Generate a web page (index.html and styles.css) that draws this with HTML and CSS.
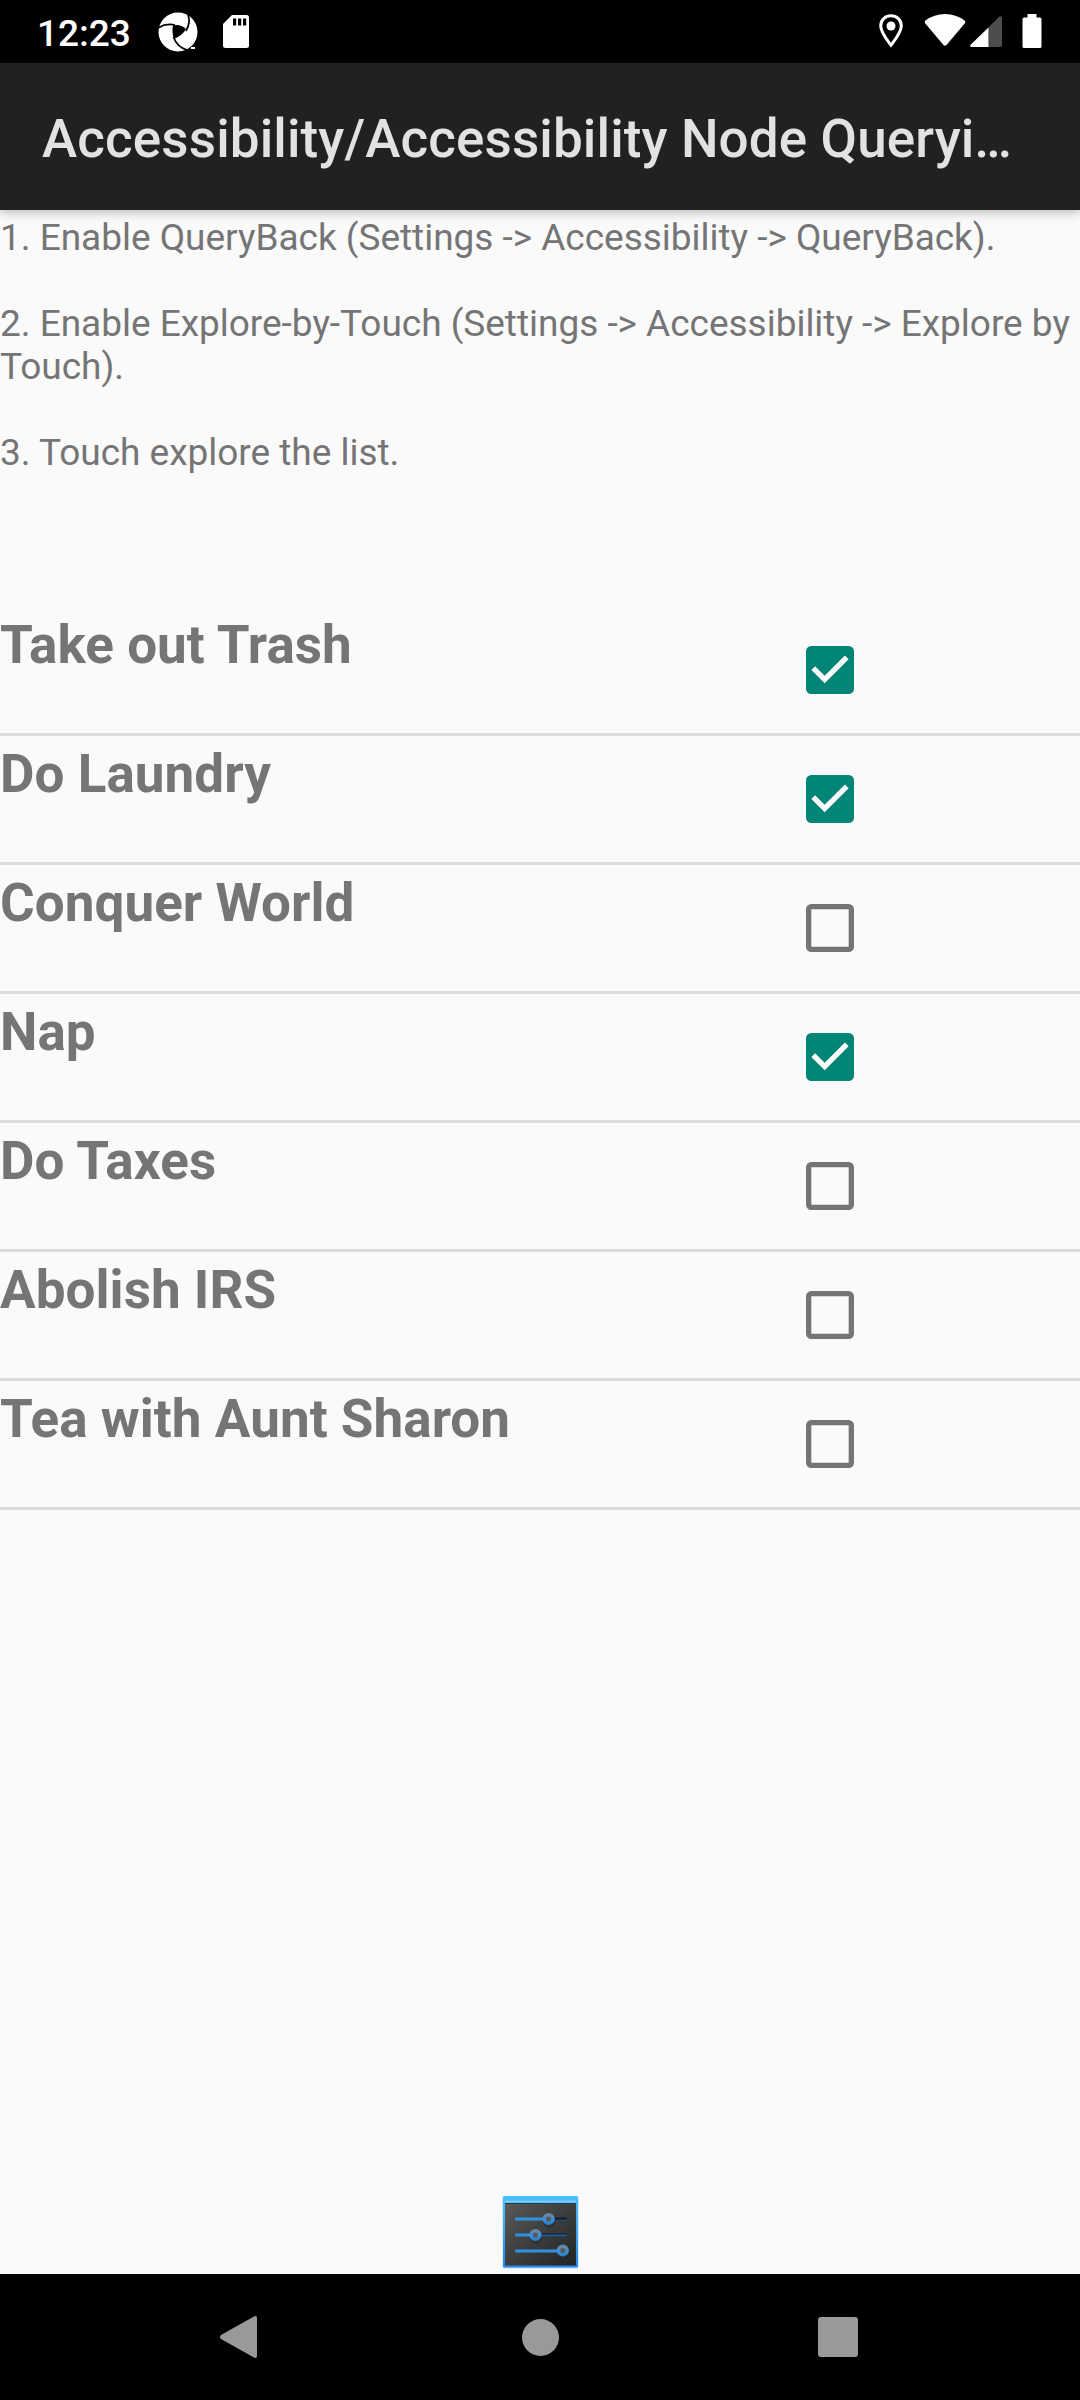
FILE: index.html
```html
<!DOCTYPE html>
<html lang="en">
<head>
<meta charset="utf-8">
<title>Accessibility Node Querying</title>
<link rel="stylesheet" href="styles.css">
</head>
<body>
<div class="screen">
  <div class="status">
    <span class="clock">12:23</span>
    <svg class="aperture" width="40" height="40" viewBox="0 0 40 40">
      <circle cx="20" cy="20" r="19.5" fill="#fff"/>
      <path d="M15 13.500Q22 11.500 28 17Q25 23 16 27Q13.500 20 15 13.500Z" fill="#000"/>
      <g fill="none" stroke="#000" stroke-width="1.700">
        <path d="M0 16Q8 11 17 13"/>
        <path d="M28 19Q33 10 30 3"/>
        <path d="M15.500 25Q19 35 29 38"/>
      </g>
      <path d="M33 35h4v2h-4z" fill="#fff"/>
    </svg>
    <svg class="sd" width="26" height="33" viewBox="0 0 26 33">
      <path d="M9 0H23.500Q26 0 26 2.500V30.500Q26 33 23.500 33H2.500Q0 33 0 30.500V9Z" fill="#fff"/>
      <path d="M10 3.500h3.200v7H10zM15 3.500h3.200v7H15zM20 3.500h3.200v7H20z" fill="#000"/>
    </svg>
    <span class="spring"></span>
    <svg class="pin" width="24" height="34" viewBox="0 0 24 34">
      <path d="M12 1.700C6.200 1.700 1.700 6 1.700 11.700C1.700 18.500 7.500 25 12 31.200C16.500 25 22.300 18.500 22.300 11.700C22.300 6 17.800 1.700 12 1.700Z" fill="none" stroke="#fff" stroke-width="3"/>
      <circle cx="12" cy="12" r="4.500" fill="#fff"/>
    </svg>
    <svg class="wifi" width="42" height="32" viewBox="0 0 42 32">
      <path d="M1.500 6.500Q10 0 21 0T40.500 6.500Q42 8 40.700 9.500L22.500 31Q21 32.500 19.500 31L1.300 9.500Q0 8 1.500 6.500Z" fill="#fff"/>
    </svg>
    <svg class="cell" width="32" height="31" viewBox="0 0 32 31">
      <path d="M18.500 11.500L29 .8Q32-1 32 2V29Q32 31 30 31H18.500Z" fill="#4d4d4d"/>
      <path d="M18.500 11.500V31H2Q-1 31 .8 28.500Z" fill="#fff"/>
    </svg>
    <svg class="battery" width="20" height="34" viewBox="0 0 20 34">
      <path d="M5.500 0h9v3.500H18Q19.500 3.500 19.500 5V32.500Q19.500 34 18 34H2Q.5 34 .5 32.500V5Q.5 3.500 2 3.500H5.500Z" fill="#fff"/>
    </svg>
  </div>
  <header class="bar"><h1 class="title">Accessibility/Accessibility Node Queryi…</h1></header>
  <main class="content">
    <div class="steps">
      <p>1. Enable QueryBack (Settings -&gt; Accessibility -&gt; QueryBack).</p>
      <p>2. Enable Explore-by-Touch (Settings -&gt; Accessibility -&gt; Explore by Touch).</p>
      <p>3. Touch explore the list.</p>
    </div>
    <svg class="defs" width="0" height="0">
      <symbol id="on" viewBox="0 0 24 24">
        <path fill="#008577" d="M19 3H5a2 2 0 0 0-2 2v14a2 2 0 0 0 2 2h14a2 2 0 0 0 2-2V5a2 2 0 0 0-2-2zM10 17l-5-5 1.410-1.410L10 14.170l7.590-7.590L19 8z"/>
      </symbol>
      <symbol id="off" viewBox="0 0 24 24">
        <path fill="#757575" d="M19 5v14H5V5h14m0-2H5a2 2 0 0 0-2 2v14a2 2 0 0 0 2 2h14a2 2 0 0 0 2-2V5a2 2 0 0 0-2-2z"/>
      </symbol>
    </svg>
    <ul class="list">
      <li class="row"><span class="label">Take out Trash</span><svg class="box"><use href="#on"/></svg></li>
      <li class="row"><span class="label">Do Laundry</span><svg class="box"><use href="#on"/></svg></li>
      <li class="row"><span class="label">Conquer World</span><svg class="box"><use href="#off"/></svg></li>
      <li class="row"><span class="label">Nap</span><svg class="box"><use href="#on"/></svg></li>
      <li class="row"><span class="label">Do Taxes</span><svg class="box"><use href="#off"/></svg></li>
      <li class="row"><span class="label">Abolish IRS</span><svg class="box"><use href="#off"/></svg></li>
      <li class="row"><span class="label">Tea with Aunt Sharon</span><svg class="box"><use href="#off"/></svg></li>
    </ul>
    <svg class="settings" width="77" height="74" viewBox="0 0 76 74" preserveAspectRatio="none">
      <defs>
        <linearGradient id="frame" x1="0" y1="0" x2="0" y2="1"><stop offset="0" stop-color="#46c2fb"/><stop offset=".5" stop-color="#38a6f5"/><stop offset="1" stop-color="#2586f5"/></linearGradient>
        <linearGradient id="panel" x1="0" y1="0" x2="1" y2="1"><stop offset="0" stop-color="#5a5a57"/><stop offset=".5" stop-color="#3c3e3d"/><stop offset="1" stop-color="#222423"/></linearGradient>
        <linearGradient id="knob" x1="0" y1="0" x2="0" y2="1"><stop offset="0" stop-color="#6685a6"/><stop offset=".6" stop-color="#3e90d5"/><stop offset="1" stop-color="#2685d9"/></linearGradient>
      </defs>
      <rect x=".5" y="1" width="75" height="72.500" rx="2" fill="#b9d6f2"/>
      <rect x="1" y="1" width="74" height="71.500" rx="1.500" fill="url(#frame)"/>
      <path d="M3 6.500H73" stroke="#8ccdf2" stroke-width="1.500"/>
      <rect x="3" y="8" width="70" height="62.500" fill="url(#panel)"/>
      <path d="M3 8.500H73" stroke="#28394a"/>
      <path d="M52 24H64M36 40H64" stroke="#101c2c" stroke-width="3"/>
      <path d="M36 40.500H64" stroke="#245b96" stroke-width="2"/>
      <path d="M13 24H41M13 40H29M13 56H56" stroke="#3291df" stroke-width="3"/>
      <path d="M52 25.200H64" stroke="#245b96"/>
      <g fill="#202323" opacity=".45"><circle cx="47" cy="27" r="6"/><circle cx="34" cy="43" r="6"/><circle cx="61" cy="59" r="6"/></g>
      <g fill="#5b5755" stroke="url(#knob)" stroke-width="3.500"><circle cx="46" cy="24" r="4.300"/><circle cx="33" cy="40" r="4.300"/><circle cx="60" cy="55.500" r="4.300"/></g>
    </svg>
  </main>
  <nav class="nav">
    <svg width="38" height="42" viewBox="0 0 38 42"><path d="M1 19L33.500.7Q37 -1 37 2V40Q37 43 33.500 41.300L1 23Q-1 21 1 19Z" fill="#999"/></svg>
    <svg width="38" height="38" viewBox="0 0 38 38"><circle cx="18.500" cy="19.500" r="18.500" fill="#999"/></svg>
    <svg width="40" height="40" viewBox="0 0 40 40"><rect width="40" height="40" rx="3" fill="#999"/></svg>
  </nav>
</div>
</body>
</html>
```
FILE: styles.css
```css
* { box-sizing: border-box; }
body { margin: 0; font-family: Roboto, sans-serif; background: #fafafa; }
svg { display: block; flex: none; }
.screen { width: 1080px; height: 2400px; display: flex; flex-direction: column; overflow: hidden; }
.status { height: 63px; flex: none; background: #000; color: #fff; display: flex; align-items: flex-start; padding-right: 38px; }
.clock { font-size: 37px; font-weight: 500; line-height: 43px; padding: 12px 0 0 37px; width: 158px; }
.aperture { margin-top: 12px; }
.sd { margin: 15px 0 0 25px; }
.spring { flex: 1; }
.pin { margin: 14px 21px 0 0; }
.wifi { margin: 14px 4px 0 0; }
.cell { margin: 16px 20px 0 0; }
.battery { margin-top: 14px; }
.bar { height: 147px; flex: none; background: #212121; padding: 45px 0 0 42px; box-shadow: 0 2px 10px rgba(0, 0, 0, .28); z-index: 1; }
.title { margin: 0; color: #e2e2e2; font-size: 53px; line-height: 62px; font-weight: 500; letter-spacing: .12px; white-space: nowrap; }
.content { flex: 1; display: flex; flex-direction: column; min-height: 0; }
.steps { height: 397px; padding-top: 6px; display: flex; flex-direction: column; gap: 43px; color: #757575; font-size: 37px; line-height: 43px; letter-spacing: -.02px; }
.steps p { margin: 0; }
.defs { position: absolute; }
.list { margin: 0; padding: 0; list-style: none; }
.row { height: 129px; border-bottom: 3px solid #dcdcdc; display: grid; grid-template-columns: 798px 64px; }
.label { color: #757575; font-size: 53px; line-height: 62px; font-weight: 700; letter-spacing: .05px; padding-top: 7px; white-space: nowrap; }
.box { width: 64px; height: 64px; margin-top: 31px; }
.settings { margin: auto 501px 5px 502px; }
.nav { height: 126px; flex: none; background: #000; display: grid; grid-template-columns: 302px 296px 40px; align-items: center; padding-left: 220px; }
```
